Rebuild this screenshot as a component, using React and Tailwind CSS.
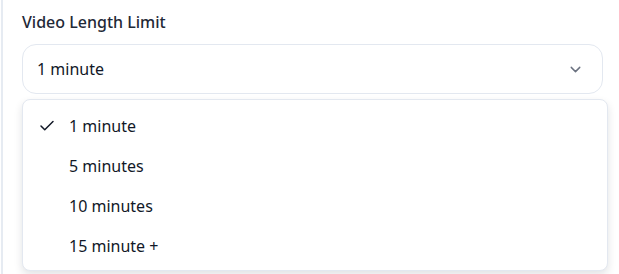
import React from "react";

function Check() {
  return (
    <svg width="18" height="18" viewBox="0 0 24 24" fill="none" stroke="#111827" strokeWidth="2" strokeLinecap="round" strokeLinejoin="round">
      <path d="M20 6 9 17l-5-5" />
    </svg>
  );
}

function Chevron() {
  return (
    <svg width="17" height="17" viewBox="0 0 24 24" fill="none" stroke="#6b7280" strokeWidth="2" strokeLinecap="round" strokeLinejoin="round">
      <path d="m6 9 6 6 6-6" />
    </svg>
  );
}

export default function App() {
  const items = ["1 minute", "5 minutes", "10 minutes", "15 minute +"];
  return (
    <div className="w-[619px] h-[274px] overflow-hidden bg-white" style={{ fontFamily: '"Noto Sans", sans-serif' }}>
      <div className="relative h-full ml-[1px] border-l-2 border-[#e6ebf2] pl-[19px] pr-[16px] pt-[11px]">
        <div className="text-[16px] font-medium text-[#1f2937] leading-[22px]">Video Length Limit</div>
        <button className="mt-[11px] w-[581px] h-[50px] flex items-center justify-between rounded-[14px] border border-[#e3e8f0] bg-white pl-[14px] pr-[18px] text-[16px] text-[#111827]">
          <span>1 minute</span>
          <Chevron />
        </button>
        <div className="mt-[20px] flex w-[580px] h-[60px]">
          <div className="w-[278px] rounded-md border border-[#d6dbe3]"></div>
          <div className="flex-1 rounded-md border border-[#d6dbe3]"></div>
        </div>
        <div className="absolute left-[19px] top-[99px] w-[586px] h-[172px] rounded-[8px] border border-[#e3e8f0] bg-white shadow-[0_4px_8px_rgba(15,23,42,0.12)] py-[6px]">
          {items.map((t, i) => (
            <div key={t} className="flex items-center h-[40px] text-[16px] text-[#111827]">
              <div className="w-[46px] pl-[15px] flex items-center">{i === 0 ? <Check /> : null}</div>
              <span>{t}</span>
            </div>
          ))}
        </div>
      </div>
    </div>
  );
}
